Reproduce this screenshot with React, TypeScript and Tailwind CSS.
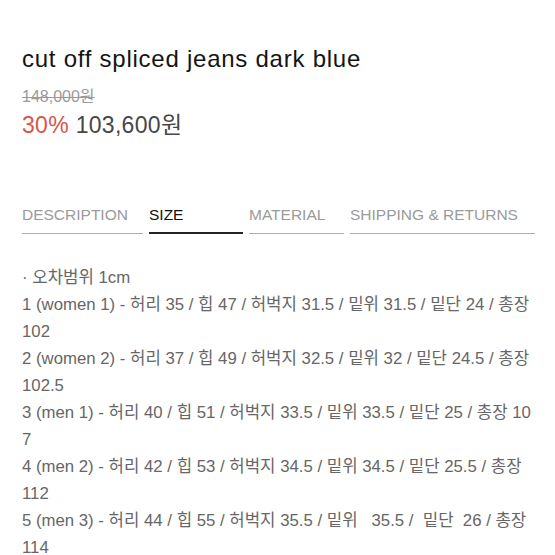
import React from "react";

const lines: string[] = [
  "· 오차범위 1cm",
  "1 (women 1) - 허리 35 / 힙 47 / 허벅지 31.5 / 밑위 31.5 / 밑단 24 / 총장",
  "102",
  "2 (women 2) - 허리 37 / 힙 49 / 허벅지 32.5 / 밑위 32 / 밑단 24.5 / 총장",
  "102.5",
  "3 (men 1) - 허리 40 / 힙 51 / 허벅지 33.5 / 밑위 33.5 / 밑단 25 / 총장 10",
  "7",
  "4 (men 2) - 허리 42 / 힙 53 / 허벅지 34.5 / 밑위 34.5 / 밑단 25.5 / 총장",
  "112",
  "5 (men 3) - 허리 44 / 힙 55 / 허벅지 35.5 / 밑위   35.5 /  밑단  26 / 총장",
  "114",
];

const tabs = [
  { label: "DESCRIPTION", w: "w-[121px]", active: false },
  { label: "SIZE", w: "w-[94px]", active: true },
  { label: "MATERIAL", w: "w-[95px]", active: false },
  { label: "SHIPPING & RETURNS", w: "w-[185px]", active: false },
];

export default function App() {
  return (
    <div
      className="w-[555px] bg-white pl-[22px] pt-[44px]"
      style={{ fontFamily: '"Liberation Sans", "Noto Sans CJK KR", sans-serif' }}
    >
      <h1 className="text-[24px] leading-[30px] text-[#141414] tracking-[0.75px]">
        cut off spliced jeans dark blue
      </h1>
      <div className="mt-[13px] text-[16px] leading-[20px] text-[#9a9a9a] line-through">
        148,000원
      </div>
      <div className="mt-[3px] text-[23px] leading-[30px] tracking-[0.3px]">
        <span className="text-[#d9544a]">30%</span>{" "}
        <span className="text-[#474747]">103,600원</span>
      </div>
      <div className="mt-[65px] flex gap-[6px]">
        {tabs.map((t) => (
          <div
            key={t.label}
            className={`${t.w} text-[15.5px] leading-[20px] pb-[7px] ${
              t.active
                ? "text-[#111] border-b-2 border-[#222]"
                : "text-[#9a9a9a] border-b border-[#adadad]"
            }`}
          >
            {t.label}
          </div>
        ))}
      </div>
      <div className="mt-[30px] text-[16.75px] text-[#666]">
        {lines.map((l, i) => (
          <div key={i} className="h-[27px] leading-[27px] whitespace-pre">
            {l}
          </div>
        ))}
      </div>
    </div>
  );
}
